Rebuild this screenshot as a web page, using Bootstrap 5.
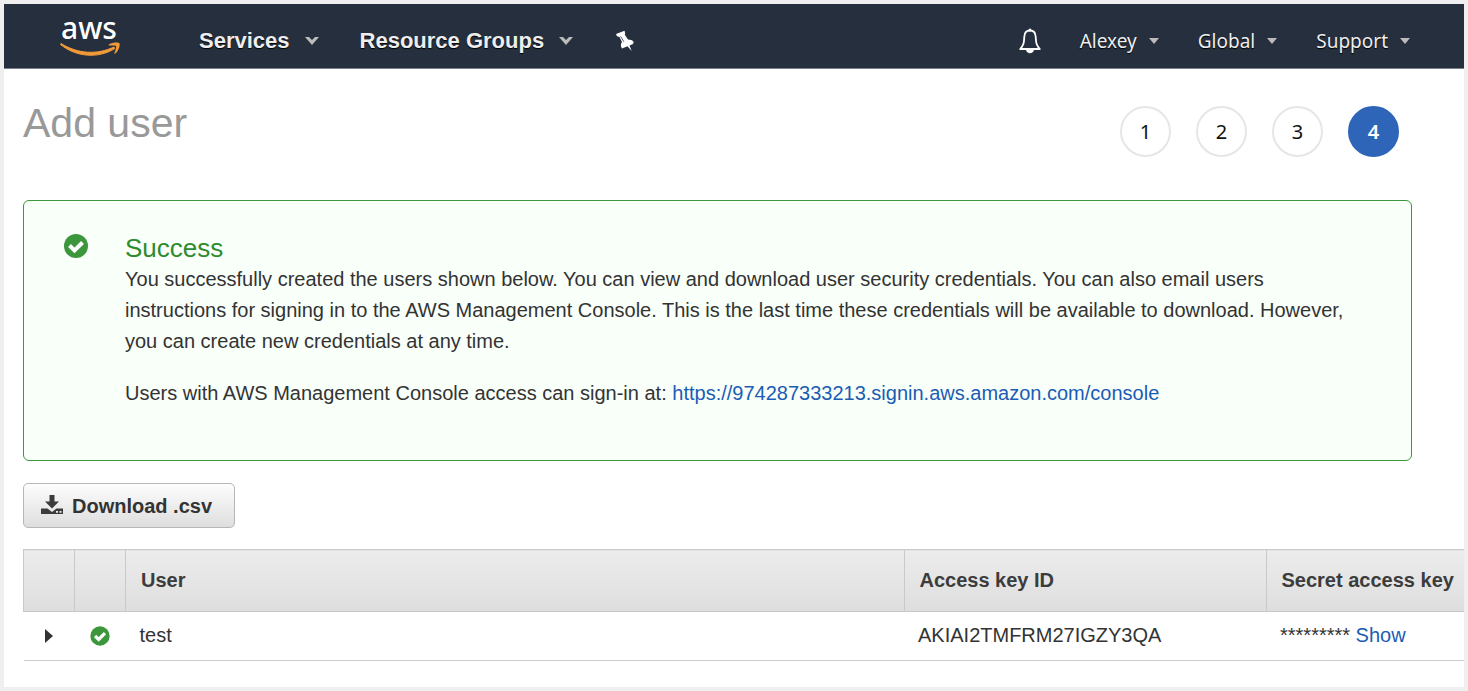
<!DOCTYPE html>
<html lang="en">
<head>
<meta charset="utf-8">
<meta name="viewport" content="width=device-width, initial-scale=1">
<title>Add user</title>
<link rel="stylesheet" href="https://cdn.jsdelivr.net/npm/bootstrap@5.3.0/dist/css/bootstrap.min.css">
<style>
  body { background: #efefef; color: #333; font-family: "Liberation Sans", Arial, sans-serif; font-size: 20px; line-height: 31px; padding: 4px; min-height: 100vh; }
  a { color: #1b5cb4; text-decoration: none; }
  .console { min-height: calc(100vh - 8px); overflow-x: hidden; }
  .topbar { background: #252f3e; border-bottom: 1px solid #7b818a; height: 65px; padding: 0 53px 0 56px; }
  .topbar .btn { color: #eee; border: 0; padding: 0; line-height: 30px; display: flex; align-items: center; text-shadow: 0 1px 1px #000; --bs-btn-hover-color: #fff; }
  .menu-main, .menu-account { padding-top: 10px; }
  .menu-main .btn { font-size: 22px; font-weight: 700; gap: 15px; }
  .menu-account .btn { font-family: "Noto Sans", sans-serif; font-size: 19px; gap: 11px; }
  .brand-link { margin-right: 75px; }
  .menu-main { gap: 41px; }
  .menu-account { gap: 38px; }
  .content-area { padding: 30px 0 24px 19px; }
  .heading-row { margin: 0 65px 43px 0; }
  .page-title { color: #999; font-size: 41px; line-height: 48px; }
  .steps { gap: 25px; padding-top: 7px; font-family: "Noto Sans", sans-serif; color: #111; }
  .step { width: 51px; height: 51px; border: 2px solid #e6e6e6; }
  .step.current { background: #2e65b8; border-color: #2e65b8; color: #fff; font-weight: 600; }
  .notice { background: #f9fff9; border: 1px solid #3c963c; border-radius: 6px; margin: 0 52px 22px 0; padding: 31px 56px 26px 39px; min-height: 261px; gap: 36px; }
  .notice-title { color: #2e8b2e; font-size: 26px; line-height: 32px; }
  .notice p { margin-bottom: 21px; }
  .download { height: 45px; font-size: 20px; font-weight: 700; color: #333; padding: 0 22px 0 16px; gap: 8px; border: 1px solid #b7b7b7; border-radius: 5px; background: linear-gradient(#fdfdfd, #dedede); margin-bottom: 21px; }
  .users { table-layout: fixed; margin: 0; color: #333; }
  .users th { height: 62px; padding: 0 0 0 15px; vertical-align: middle; white-space: nowrap; color: #3c3c3c; border: 1px solid #c9c9c9; border-right: 0; background: linear-gradient(#ececec, #dedede); }
  .users td { height: 49px; padding: 0 0 2px 14px; vertical-align: middle; white-space: nowrap; border-bottom: 1px solid #ccc; }
  .users .icon-cell { padding: 0; text-align: center; }
  .col-icon { width: 51px; }
  .col-key { width: 362px; }
  .col-secret { width: 198px; }
  svg { display: block; flex: none; }
</style>
</head>
<body>
<div class="console bg-white">
  <nav class="topbar d-flex align-items-center justify-content-between" aria-label="Main">
    <div class="d-flex align-items-center">
      <a class="brand-link" href="#" aria-label="AWS home">
        <svg width="64" height="60" viewBox="0 -8 64 60">
          <text x="1" y="25" font-family="Noto Sans, sans-serif" font-size="30" font-weight="500" fill="#fff">aws</text>
          <path d="M1 29.500C18 40 37 41 54 33l.8 1.600C38 45 16 43 .5 30.500z" fill="#f19a38" stroke="#f19a38"/>
          <path d="M49 30.200c4-2.200 10-2 10.600-.8.500 2-1 7.500-4.300 10.200-.8.500-1.300.2-.9-.7 1.200-2.700 2.200-6 1.700-6.900-.7-.9-4.200-.6-6.600-.4-.8.100-1.100-.9-.5-1.400z" fill="#f19a38"/>
        </svg>
      </a>
      <div class="menu-main d-flex align-items-center">
        <button class="btn" type="button">Services
          <svg width="14" height="10" viewBox="0 0 14 10"><path d="M0 1h4l3 3 3-3h4L7 9z" fill="#bbb"/></svg></button>
        <button class="btn" type="button">Resource Groups
          <svg width="14" height="10" viewBox="0 0 14 10"><path d="M0 1h4l3 3 3-3h4L7 9z" fill="#bbb"/></svg></button>
        <button class="btn" type="button" aria-label="Pin shortcuts">
          <svg width="22" height="22" viewBox="0 0 22 22"><path d="M2 4 10.500.8 11.200 3.300 10.800 4.800 14 9.500c2.500 0 4.500.7 5.700 2.500L19 14l-3.500 1.500 2.200 5.500-4.200-4.700L8 18.500l-1-2c-.3-1.600 0-3 1-4.500L5.500 7 3 6.200z" fill="#fff"/><path d="m6.600 6.300 3.300 5.500" stroke="#59616d"/></svg></button>
      </div>
    </div>
    <div class="menu-account d-flex align-items-center">
      <button class="btn" type="button" aria-label="Notifications">
        <svg width="24" height="26" viewBox="0 0 24 26"><path d="M12 2.500c-3.600 0-5.500 2.500-5.700 6.200C6 14.500 6 16.500 2.200 21h19.600C18 16.500 18 14.500 17.700 8.700 17.500 5 15.600 2.500 12 2.500z" fill="none" stroke="#fff" stroke-width="1.800" stroke-linejoin="round"/><circle cx="12" cy="2" r="1.500" fill="#fff"/><path d="M8 21.500h8c-.5 5-7.500 5-8 0z" fill="#fff"/></svg></button>
      <button class="btn" type="button">Alexey
        <svg width="12" height="8" viewBox="0 0 12 8"><path d="M1 1h10L6 7z" fill="#bbb"/></svg></button>
      <button class="btn" type="button">Global
        <svg width="12" height="8" viewBox="0 0 12 8"><path d="M1 1h10L6 7z" fill="#bbb"/></svg></button>
      <button class="btn" type="button">Support
        <svg width="12" height="8" viewBox="0 0 12 8"><path d="M1 1h10L6 7z" fill="#bbb"/></svg></button>
    </div>
  </nav>

  <main class="content-area">
    <div class="heading-row d-flex justify-content-between align-items-start">
      <h1 class="page-title fw-normal m-0">Add user</h1>
      <ol class="steps d-flex list-unstyled m-0">
        <li class="step rounded-circle d-flex align-items-center justify-content-center">1</li>
        <li class="step rounded-circle d-flex align-items-center justify-content-center">2</li>
        <li class="step rounded-circle d-flex align-items-center justify-content-center">3</li>
        <li class="step current rounded-circle d-flex align-items-center justify-content-center" aria-current="step">4</li>
      </ol>
    </div>

    <section class="notice d-flex align-items-start" role="status">
      <svg width="26" height="28" viewBox="0 0 26 28"><circle cx="13" cy="14" r="12" fill="#3c963c"/><path d="m6.500 13.500 5 5 8-8" fill="none" stroke="#fff" stroke-width="4"/></svg>
      <div>
        <h2 class="notice-title fw-normal m-0">Success</h2>
        <p>You successfully created the users shown below. You can view and download user security credentials. You can also email users instructions for signing in to the AWS Management Console. This is the last time these credentials will be available to download. However, you can create new credentials at any time.</p>
        <p>Users with AWS Management Console access can sign-in at: <a href="#">https://974287333213.signin.aws.amazon.com/console</a></p>
      </div>
    </section>

    <button class="download btn d-flex align-items-center" type="button">
      <svg width="24" height="24" viewBox="0 0 24 24"><path d="M9.500 1h5v6.500H19l-7 7-7-7h4.500z" fill="#3c3c3c"/><path d="M1 14.500h6.500L12 18l4.500-3.500H23V20H1z" fill="#3c3c3c"/><path d="M16 17h2v1.700h-2zm3.500 0h2v1.700h-2z" fill="#eee"/></svg>
      Download .csv</button>

    <table class="users w-100">
      <colgroup><col class="col-icon"><col class="col-icon"><col><col class="col-key"><col class="col-secret"></colgroup>
      <thead>
        <tr><th aria-label="Expand"></th><th aria-label="Status"></th><th scope="col">User</th><th scope="col">Access key ID</th><th scope="col">Secret access key</th></tr>
      </thead>
      <tbody>
        <tr>
          <td class="icon-cell"><button class="btn d-block mx-auto p-0 border-0" type="button" aria-label="Expand test"><svg width="10" height="14" viewBox="0 0 10 14"><path d="M1 0v14l8-7z" fill="#333"/></svg></button></td>
          <td class="icon-cell"><svg class="mx-auto" width="20" height="20" viewBox="0 0 20 20"><circle cx="10" cy="10" r="9.700" fill="#3c963c"/><path d="m5 10 3.700 3.500L15 7.200" fill="none" stroke="#fff" stroke-width="3.200"/></svg></td>
          <td>test</td>
          <td>AKIAI2TMFRM27IGZY3QA</td>
          <td>********* <a href="#">Show</a></td>
        </tr>
      </tbody>
    </table>
  </main>
</div>
<script src="https://cdn.jsdelivr.net/npm/bootstrap@5.3.0/dist/js/bootstrap.bundle.min.js"></script>
</body>
</html>
